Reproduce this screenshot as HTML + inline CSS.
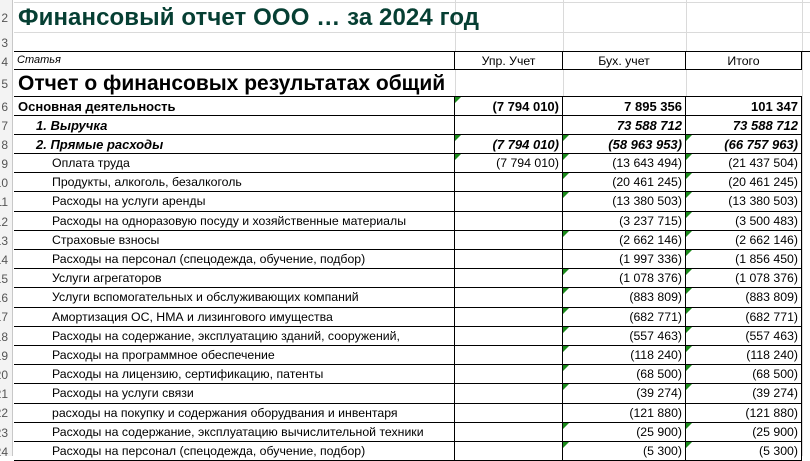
<!DOCTYPE html>
<html><head><meta charset="utf-8">
<style>
*{margin:0;padding:0;box-sizing:border-box}
body{width:810px;height:456px;overflow:hidden;background:#fff;font-family:"Liberation Sans",Arial,sans-serif;color:#000;position:relative}
.rh{position:absolute;left:0;top:0;width:13px;height:456px;background:#f3f3f3;border-right:1px solid #c8c8c8;overflow:hidden}
.rn{position:absolute;right:4px;text-align:right;font-size:12px;color:#555;line-height:1;white-space:nowrap}
.gl{position:absolute;background:#dadada}
.r{position:absolute;left:14px;width:796px}
.c{position:absolute;top:0;height:100%;white-space:nowrap;overflow:hidden;font-size:12.3px;display:flex;align-items:center}
.a{left:0;width:441px}
.b{left:441px;width:108px}
.cc{left:549px;width:123px}
.d{left:672px;width:116px}
.n{justify-content:flex-end;padding-right:3px}
.bd .a,.bd .b,.bd .cc,.bd .d{border-right:1px solid #000;border-bottom:1px solid #000}
.g{position:absolute;left:0;top:0;width:0;height:0;border-top:6px solid #1a8a1a;border-right:6px solid transparent}
</style></head><body>
<div class="rh">
<div class="rn" style="top:12px">2</div>
<div class="rn" style="top:37px">3</div>
<div class="rn" style="top:56px">4</div>
<div class="rn" style="top:78px">5</div>
<div class="rn" style="top:101px">6</div>
<div class="rn" style="top:120px">7</div>
<div class="rn" style="top:139px">8</div>
<div class="rn" style="top:158px">9</div>
<div class="rn" style="top:177px">10</div>
<div class="rn" style="top:196px">11</div>
<div class="rn" style="top:216px">12</div>
<div class="rn" style="top:235px">13</div>
<div class="rn" style="top:254px">14</div>
<div class="rn" style="top:273px">15</div>
<div class="rn" style="top:292px">16</div>
<div class="rn" style="top:311px">17</div>
<div class="rn" style="top:331px">18</div>
<div class="rn" style="top:350px">19</div>
<div class="rn" style="top:369px">20</div>
<div class="rn" style="top:388px">21</div>
<div class="rn" style="top:407px">22</div>
<div class="rn" style="top:427px">23</div>
<div class="rn" style="top:446px">24</div>
</div>
<div class="gl" style="left:14px;top:2px;width:796px;height:1px"></div>
<div class="gl" style="left:14px;top:32px;width:796px;height:1px"></div>
<div class="gl" style="left:455px;top:0;width:1px;height:52px"></div>
<div class="gl" style="left:563px;top:0;width:1px;height:52px"></div>
<div class="gl" style="left:686px;top:0;width:1px;height:52px"></div>
<div class="gl" style="left:802px;top:0;width:1px;height:456px"></div>
<div class="gl" style="left:455px;top:70px;width:1px;height:27px"></div>
<div class="gl" style="left:563px;top:70px;width:1px;height:27px"></div>
<div class="gl" style="left:686px;top:70px;width:1px;height:27px"></div>

<div style="position:absolute;left:18px;top:3px;height:29px;display:flex;align-items:center;font-size:24px;font-weight:bold;color:#063f33;white-space:nowrap;letter-spacing:0.1px">Финансовый отчет ООО … за 2024 год</div>

<div class="r bd" style="top:51px;height:19px;border-top:1px solid #000">
<div class="c a" style="font-style:italic;font-size:11px;padding-left:3px;align-items:flex-start;padding-top:2px">Статья</div>
<div class="c b" style="justify-content:center">Упр. Учет</div>
<div class="c cc" style="justify-content:center">Бух. учет</div>
<div class="c d" style="justify-content:center">Итого</div>
</div>
<div style="position:absolute;left:18px;top:71px;height:26px;display:flex;align-items:center;font-size:21px;font-weight:bold;white-space:nowrap">Отчет о финансовых результатах общий</div>
<div class="gl" style="left:14px;top:96px;width:788px;height:1px;background:#000"></div>

<div class="r bd" style="top:97px;height:19px">
<div class="c a" style="padding-left:4px;font-weight:bold;font-size:13px">Основная деятельность</div>
<div class="c b n" style="font-weight:bold;font-size:13px"><span class="g"></span>(7 794 010)</div>
<div class="c cc n" style="font-weight:bold;font-size:13px">7 895 356</div>
<div class="c d n" style="font-weight:bold;font-size:13px">101 347</div>
</div>
<div class="r bd" style="top:116px;height:19px">
<div class="c a" style="padding-left:22px;font-weight:bold;font-style:italic;font-size:13px">1. Выручка</div>
<div class="c b n"></div>
<div class="c cc n" style="font-weight:bold;font-style:italic;font-size:13px">73 588 712</div>
<div class="c d n" style="font-weight:bold;font-style:italic;font-size:13px">73 588 712</div>
</div>
<div class="r bd" style="top:135px;height:19px">
<div class="c a" style="padding-left:22px;font-weight:bold;font-style:italic;font-size:13px">2. Прямые расходы</div>
<div class="c b n" style="font-weight:bold;font-style:italic;font-size:13px"><span class="g"></span>(7 794 010)</div>
<div class="c cc n" style="font-weight:bold;font-style:italic;font-size:13px"><span class="g"></span>(58 963 953)</div>
<div class="c d n" style="font-weight:bold;font-style:italic;font-size:13px"><span class="g"></span>(66 757 963)</div>
</div>

<div class="r bd" style="top:154px;height:19.2px"><div class="c a" style="padding-left:38px">Оплата труда</div><div class="c b n"><span class="g"></span>(7 794 010)</div><div class="c cc n"><span class="g"></span>(13 643 494)</div><div class="c d n"><span class="g"></span>(21 437 504)</div></div>
<div class="r bd" style="top:173.2px;height:19.2px"><div class="c a" style="padding-left:38px">Продукты, алкоголь, безалкоголь</div><div class="c b n"></div><div class="c cc n"><span class="g"></span>(20 461 245)</div><div class="c d n"><span class="g"></span>(20 461 245)</div></div>
<div class="r bd" style="top:192.4px;height:19.2px"><div class="c a" style="padding-left:38px">Расходы на услуги аренды</div><div class="c b n"></div><div class="c cc n"><span class="g"></span>(13 380 503)</div><div class="c d n"><span class="g"></span>(13 380 503)</div></div>
<div class="r bd" style="top:211.6px;height:19.2px"><div class="c a" style="padding-left:38px">Расходы на одноразовую посуду и хозяйственные материалы</div><div class="c b n"></div><div class="c cc n">(3 237 715)</div><div class="c d n"><span class="g"></span>(3 500 483)</div></div>
<div class="r bd" style="top:230.8px;height:19.2px"><div class="c a" style="padding-left:38px">Страховые взносы</div><div class="c b n"></div><div class="c cc n"><span class="g"></span>(2 662 146)</div><div class="c d n"><span class="g"></span>(2 662 146)</div></div>
<div class="r bd" style="top:250px;height:19.2px"><div class="c a" style="padding-left:38px">Расходы на персонал (спецодежда, обучение, подбор)</div><div class="c b n"></div><div class="c cc n">(1 997 336)</div><div class="c d n"><span class="g"></span>(1 856 450)</div></div>
<div class="r bd" style="top:269.2px;height:19.2px"><div class="c a" style="padding-left:38px">Услуги агрегаторов</div><div class="c b n"></div><div class="c cc n"><span class="g"></span>(1 078 376)</div><div class="c d n"><span class="g"></span>(1 078 376)</div></div>
<div class="r bd" style="top:288.4px;height:19.2px"><div class="c a" style="padding-left:38px">Услуги вспомогательных и обслуживающих компаний</div><div class="c b n"></div><div class="c cc n"><span class="g"></span>(883 809)</div><div class="c d n"><span class="g"></span>(883 809)</div></div>
<div class="r bd" style="top:307.6px;height:19.2px"><div class="c a" style="padding-left:38px">Амортизация ОС, НМА и лизингового имущества</div><div class="c b n"></div><div class="c cc n"><span class="g"></span>(682 771)</div><div class="c d n"><span class="g"></span>(682 771)</div></div>
<div class="r bd" style="top:326.8px;height:19.2px"><div class="c a" style="padding-left:38px">Расходы на содержание, эксплуатацию зданий, сооружений,</div><div class="c b n"></div><div class="c cc n"><span class="g"></span>(557 463)</div><div class="c d n"><span class="g"></span>(557 463)</div></div>
<div class="r bd" style="top:346px;height:19.2px"><div class="c a" style="padding-left:38px">Расходы на программное обеспечение</div><div class="c b n"></div><div class="c cc n"><span class="g"></span>(118 240)</div><div class="c d n"><span class="g"></span>(118 240)</div></div>
<div class="r bd" style="top:365.2px;height:19.2px"><div class="c a" style="padding-left:38px">Расходы на лицензию, сертификацию, патенты</div><div class="c b n"></div><div class="c cc n"><span class="g"></span>(68 500)</div><div class="c d n"><span class="g"></span>(68 500)</div></div>
<div class="r bd" style="top:384.4px;height:19.2px"><div class="c a" style="padding-left:38px">Расходы на услуги связи</div><div class="c b n"></div><div class="c cc n"><span class="g"></span>(39 274)</div><div class="c d n"><span class="g"></span>(39 274)</div></div>
<div class="r bd" style="top:403.6px;height:19.2px"><div class="c a" style="padding-left:38px">расходы на покупку и содержания оборудвания и инвентаря</div><div class="c b n"></div><div class="c cc n">(121 880)</div><div class="c d n">(121 880)</div></div>
<div class="r bd" style="top:422.8px;height:19.2px"><div class="c a" style="padding-left:38px">Расходы на содержание, эксплуатацию вычислительной техники</div><div class="c b n"></div><div class="c cc n"><span class="g"></span>(25 900)</div><div class="c d n"><span class="g"></span>(25 900)</div></div>
<div class="r bd" style="top:442px;height:19.2px"><div class="c a" style="padding-left:38px">Расходы на персонал (спецодежда, обучение, подбор)</div><div class="c b n"></div><div class="c cc n"><span class="g"></span>(5 300)</div><div class="c d n"><span class="g"></span>(5 300)</div></div>
</body></html>
